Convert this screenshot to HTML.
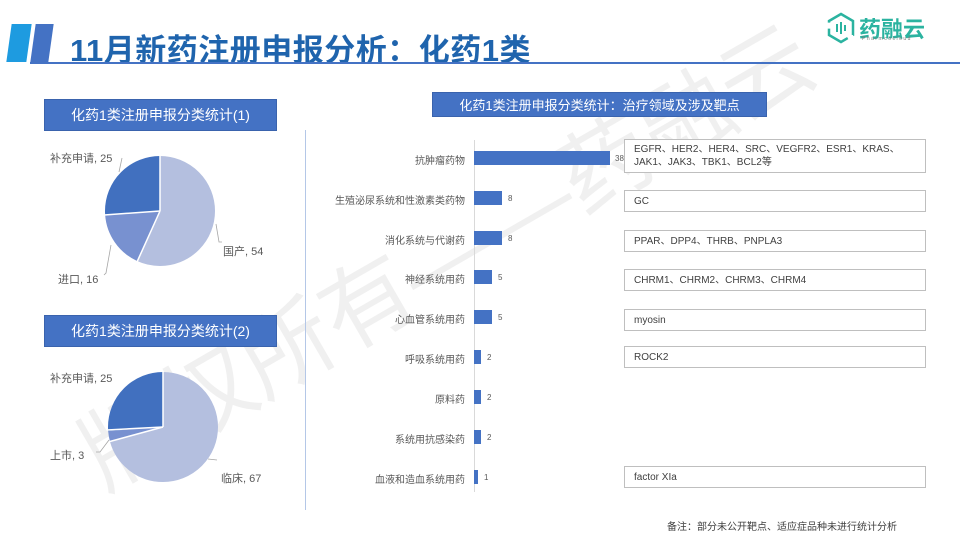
<!DOCTYPE html>
<html><head><meta charset="utf-8"><style>
*{margin:0;padding:0;box-sizing:border-box}
html,body{width:960px;height:538px;overflow:hidden}
body{background:#fff;position:relative;font-family:"Liberation Sans","Noto Sans CJK SC",sans-serif}
.abs{position:absolute}
.hdr{position:absolute;background:#4472c4;color:#fff;font-size:14px;display:flex;align-items:center;justify-content:center;border:1px solid #3a63ad}
.lbl{position:absolute;right:495px;font-size:10px;color:#595959;white-space:nowrap;text-align:right}
.bar{position:absolute;left:474px;height:14px;background:#4472c4}
.val{position:absolute;font-size:8px;color:#595959}
.tb{position:absolute;left:624px;width:302px;border:1.5px solid #bfbfbf;background:#fff;font-size:10px;color:#404040;padding:3px 9px;line-height:13px}
.pl{position:absolute;font-size:11px;color:#595959;white-space:nowrap}
</style></head><body>
<div class="abs" style="left:66px;top:425px;font-size:92px;color:rgba(0,0,0,0.06);transform:rotate(-30deg);transform-origin:0 0;white-space:nowrap;line-height:1">版权所有——药融云</div>
<div class="abs" style="left:9px;top:24px;width:20px;height:38px;background:#1e9be0;transform:skewX(-8deg)"></div>
<div class="abs" style="left:33px;top:24px;width:18px;height:38px;background:#4472c4;transform:skewX(-8deg)"></div>
<div class="abs" style="left:70px;top:25px;font-size:31px;color:#1f64ad;font-weight:bold;letter-spacing:0.5px;white-space:nowrap">11月新药注册申报分析：化药1类</div>
<div class="abs" style="left:30px;top:62px;width:930px;height:2px;background:#4472c4"></div>
<svg class="abs" style="left:826px;top:12px" width="30" height="32" viewBox="0 0 30 32"><path d="M15 2 L27 9 L27 23 L15 30 L3 23 L3 9 Z" fill="none" stroke="#2bb3a0" stroke-width="2.5" stroke-dasharray="28 6"/><path d="M11 12v8M15 10v12M19 13v6" stroke="#2bb3a0" stroke-width="2"/></svg>
<div class="abs" style="left:859px;top:12px;font-size:22px;color:#2bb3a0;font-weight:bold">药融云</div>
<div class="abs" style="left:862px;top:36px;font-size:5px;color:#777;letter-spacing:1.5px">Pharmcocloud</div>

<div class="hdr" style="left:44px;top:99px;width:233px;height:32px">化药1类注册申报分类统计(1)</div>
<div class="hdr" style="left:44px;top:315px;width:233px;height:32px">化药1类注册申报分类统计(2)</div>
<div class="hdr" style="left:432px;top:92px;width:335px;height:25px;font-size:13px">化药1类注册申报分类统计：治疗领域及涉及靶点</div>
<div class="abs" style="left:305px;top:130px;width:1px;height:380px;background:#b4c7e7"></div>

<svg class="abs" style="left:0;top:0" width="300" height="538">
<g transform="translate(160,211) rotate(-90)">
<circle r="27.5" fill="none" stroke="#b4bfdf" stroke-width="55" stroke-dasharray="98.22 172.79"/>
<circle r="27.5" fill="none" stroke="#7891d0" stroke-width="55" stroke-dasharray="0 98.22 29.1 172.79"/>
<circle r="27.5" fill="none" stroke="#4170bf" stroke-width="55" stroke-dasharray="0 127.32 45.47 172.79"/>
</g>
<g stroke="#fff" stroke-width="1.5"><line x1="160" y1="211" x2="160" y2="155"/><line x1="160" y1="211" x2="137" y2="262"/><line x1="160" y1="211" x2="104" y2="215"/></g>
<g transform="translate(163,427) rotate(-90)">
<circle r="27.5" fill="none" stroke="#b4bfdf" stroke-width="55" stroke-dasharray="121.86 172.79"/>
<circle r="27.5" fill="none" stroke="#7891d0" stroke-width="55" stroke-dasharray="0 121.86 5.46 172.79"/>
<circle r="27.5" fill="none" stroke="#4170bf" stroke-width="55" stroke-dasharray="0 127.32 45.47 172.79"/>
</g>
<g stroke="#fff" stroke-width="1.5"><line x1="163" y1="427" x2="163" y2="371"/><line x1="163" y1="427" x2="108" y2="442"/><line x1="163" y1="427" x2="107" y2="430"/></g>
<g stroke="#a6a6a6" fill="none" stroke-width="0.8"><path d="M216 224 L219 242 L222 242"/><path d="M111 245 L106 273 L104 275"/><path d="M122 158 L119 172"/><path d="M208 459 L217 460"/><path d="M109 440 L100 452 L96 452"/></g>
</svg>
<div class="pl" style="left:50px;top:150px">补充申请, 25</div>
<div class="pl" style="left:223px;top:243px">国产, 54</div>
<div class="pl" style="left:58px;top:271px">进口, 16</div>
<div class="pl" style="left:50px;top:370px">补充申请, 25</div>
<div class="pl" style="left:50px;top:447px">上市, 3</div>
<div class="pl" style="left:221px;top:470px">临床, 67</div>

<div class="abs" style="left:474px;top:140px;width:1px;height:352px;background:#d9d9d9"></div>
<div class="lbl" style="top:152px">抗肿瘤药物</div><div class="bar" style="top:151px;width:136px"></div><div class="val" style="left:615px;top:154px">38</div>
<div class="lbl" style="top:192px">生殖泌尿系统和性激素类药物</div><div class="bar" style="top:191px;width:28px"></div><div class="val" style="left:508px;top:194px">8</div>
<div class="lbl" style="top:232px">消化系统与代谢药</div><div class="bar" style="top:231px;width:28px"></div><div class="val" style="left:508px;top:234px">8</div>
<div class="lbl" style="top:271px">神经系统用药</div><div class="bar" style="top:270px;width:18px"></div><div class="val" style="left:498px;top:273px">5</div>
<div class="lbl" style="top:311px">心血管系统用药</div><div class="bar" style="top:310px;width:18px"></div><div class="val" style="left:498px;top:313px">5</div>
<div class="lbl" style="top:351px">呼吸系统用药</div><div class="bar" style="top:350px;width:7px"></div><div class="val" style="left:487px;top:353px">2</div>
<div class="lbl" style="top:391px">原料药</div><div class="bar" style="top:390px;width:7px"></div><div class="val" style="left:487px;top:393px">2</div>
<div class="lbl" style="top:431px">系统用抗感染药</div><div class="bar" style="top:430px;width:7px"></div><div class="val" style="left:487px;top:433px">2</div>
<div class="lbl" style="top:471px">血液和造血系统用药</div><div class="bar" style="top:470px;width:4px"></div><div class="val" style="left:484px;top:473px">1</div>

<div class="tb" style="top:139px;height:34px">EGFR、HER2、HER4、SRC、VEGFR2、ESR1、KRAS、JAK1、JAK3、TBK1、BCL2等</div>
<div class="tb" style="top:190px;height:22px;padding-top:4px">GC</div>
<div class="tb" style="top:230px;height:22px;padding-top:4px">PPAR、DPP4、THRB、PNPLA3</div>
<div class="tb" style="top:269px;height:22px;padding-top:4px">CHRM1、CHRM2、CHRM3、CHRM4</div>
<div class="tb" style="top:309px;height:22px;padding-top:4px">myosin</div>
<div class="tb" style="top:346px;height:22px;padding-top:4px">ROCK2</div>
<div class="tb" style="top:466px;height:22px;padding-top:4px">factor XIa</div>
<div class="abs" style="left:667px;top:518px;font-size:10px;color:#404040">备注：部分未公开靶点、适应症品种未进行统计分析</div>
</body></html>
